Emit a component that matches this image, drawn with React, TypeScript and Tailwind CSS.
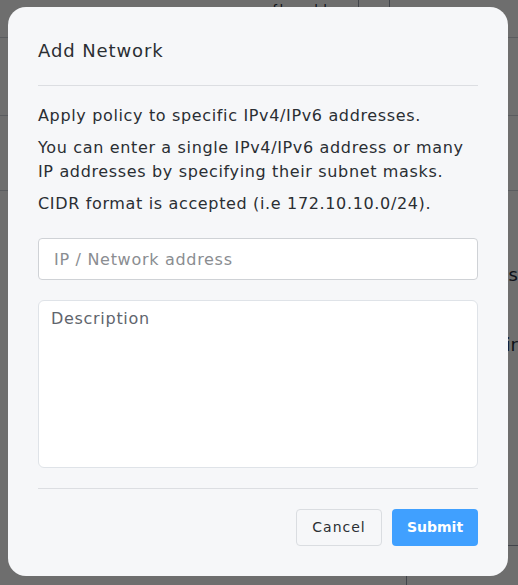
import React from 'react';

const font = { fontFamily: '"DejaVu Sans", "Open Sans", sans-serif' };

export default function App() {
  return (
    <div className="relative h-[585px] w-[518px] overflow-hidden bg-white" style={font}>
      {/* page behind the overlay */}
      <div className="flex h-full flex-col text-gray-800">
        <div className="flex h-[20px] items-end gap-[30px] pl-[270px]">
          <span className="text-sm">{'{|'}</span>
          <span className="text-sm">| |</span>
          <div className="h-full border-l border-gray-400" />
          <div className="h-full border-l border-gray-400" />
        </div>
        <div className="mt-[17px] border-t border-gray-300" />
        <div className="mt-[77px] border-t border-gray-300" />
        <div className="mt-[74px] border-t border-gray-300" />
        <div className="mt-[70px] self-end text-lg">s</div>
        <div className="mt-[42px] self-end text-lg">ir</div>
        <div className="mt-auto flex h-[40px] items-end self-end">
          <div className="h-full w-[112px] border-l border-t border-gray-400 pl-[28px] text-xl">IP / Ne</div>
        </div>
      </div>

      {/* overlay + modal */}
      <div className="absolute inset-0 bg-[#000000]/[0.57]">
        <div className="ml-[8px] mt-[7px] flex h-[569px] w-[500px] flex-col rounded-[18px] bg-[#f6f7f9] px-[30px] tracking-[0.65px]">
          <h2 className="mt-[30px] text-[18px] leading-[28px] tracking-[0.9px] text-[#2b2f33]">Add Network</h2>
          <div className="mt-[20px] border-t border-[#dcdee2]" />

          <div className="mt-[18px] flex flex-col gap-[8px] text-[16px] leading-[24px] text-[#2a2e33]">
            <p>Apply policy to specific IPv4/IPv6 addresses.</p>
            <p>
              You can enter a single IPv4/IPv6 address or many
              <br />
              IP addresses by specifying their subnet masks.
            </p>
            <p>CIDR format is accepted (i.e 172.10.10.0/24).</p>
          </div>

          <input
            className="mt-[22px] h-[42px] w-full rounded-[4px] border border-[#cfd2d6] bg-white px-[15px] text-[16px] tracking-[0.7px] text-gray-800 outline-none placeholder:text-[#8a8d91]"
            placeholder="IP / Network address"
            style={font}
          />
          <textarea
            className="mt-[20px] h-[168px] w-full resize-none rounded-[6px] border border-[#dfe3e8] bg-white px-[12px] py-[6px] text-[16px] leading-[24px] tracking-[0.7px] text-gray-800 outline-none placeholder:text-[#5f656d]"
            placeholder="Description"
            style={font}
          />

          <div className="mt-[20px] border-t border-[#dcdee2]" />

          <div className="mt-[20px] flex justify-end gap-[10px]">
            <button className="h-[37px] w-[86px] rounded-[4px] border border-[#dadde1] bg-[#f6f7f9] text-[14px] tracking-[1px] text-[#2b2f33]">
              Cancel
            </button>
            <button className="h-[37px] w-[86px] rounded-[4px] bg-[#40a0ff] text-[14px] font-semibold tracking-[0px] text-white">
              Submit
            </button>
          </div>
        </div>
      </div>
    </div>
  );
}
